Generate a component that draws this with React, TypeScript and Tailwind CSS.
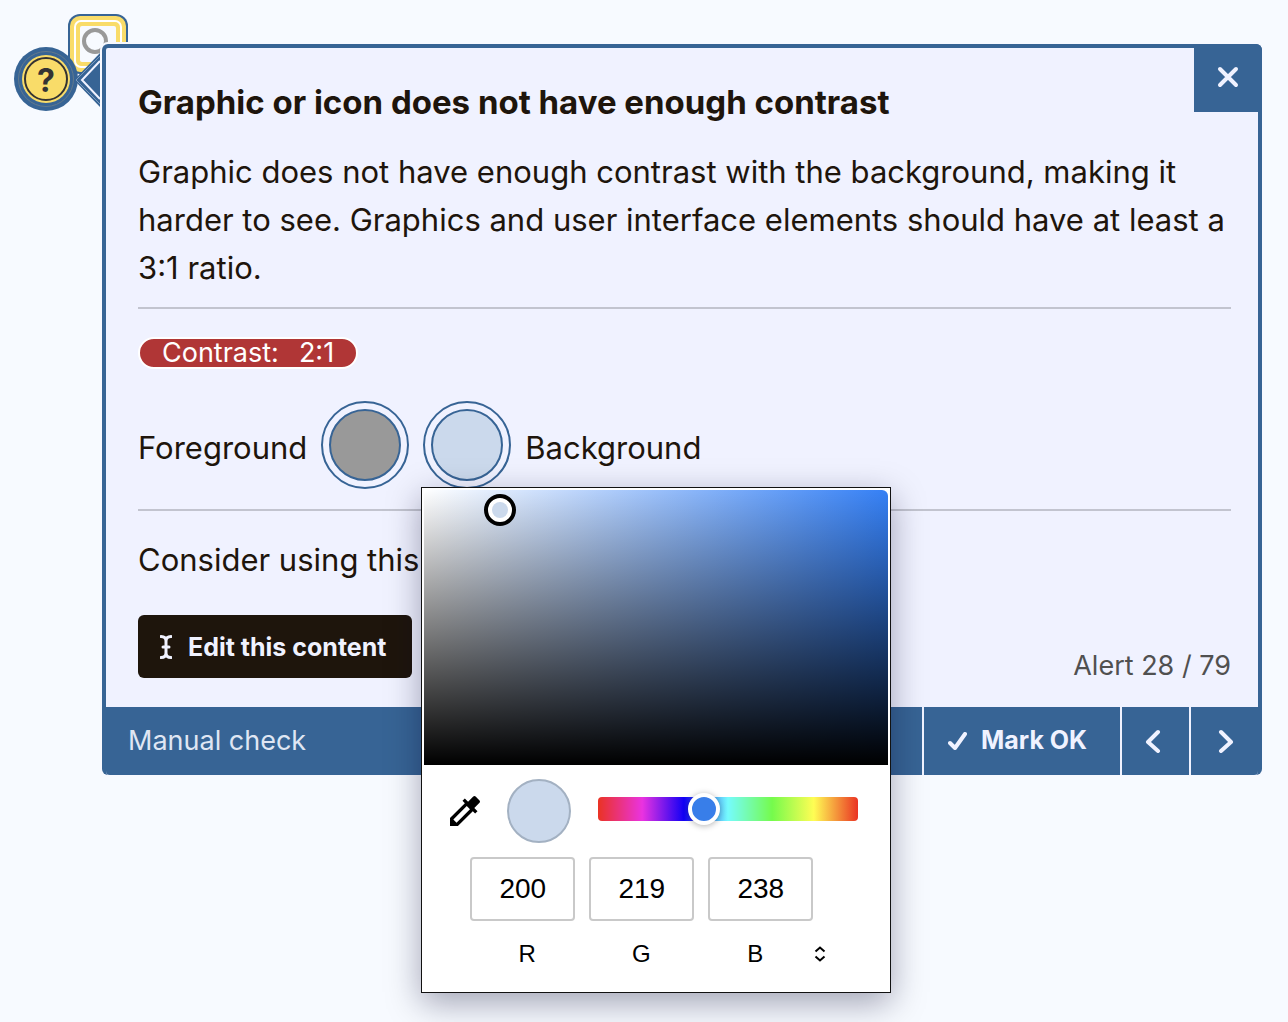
import { useState } from 'react'
import { MdColorize } from 'react-icons/md'

const channels = [
  { id: 'r', label: 'R', value: '200' },
  { id: 'g', label: 'G', value: '219' },
  { id: 'b', label: 'B', value: '238' },
]

const swatchInput =
  'block size-[88px] cursor-pointer appearance-none rounded-full border-2 border-[#376495] bg-[#f0f2ff] p-[6px] [&::-webkit-color-swatch-wrapper]:p-0 [&::-webkit-color-swatch]:rounded-full [&::-webkit-color-swatch]:border-2 [&::-webkit-color-swatch]:border-[#376495]'

function FlaggedGraphic() {
  return (
    <svg className="absolute -top-[30px] -left-[34px]" width="60" height="60" viewBox="0 0 60 60" aria-hidden="true">
      <rect x="0" y="0" width="60" height="60" rx="12" fill="#376495" />
      <rect x="2" y="2" width="56" height="56" rx="10" fill="#f9dc69" />
      <rect x="7" y="7" width="46" height="46" rx="6" fill="none" stroke="#fff" strokeWidth="2" />
      <rect x="12" y="12" width="36" height="36" rx="2" fill="#f7faff" />
      <circle cx="27" cy="27" r="11" fill="none" stroke="#999" strokeWidth="4" />
    </svg>
  )
}

function Pointer() {
  return (
    <svg className="absolute top-1 -left-[28px]" width="28" height="64" viewBox="0 0 28 64" aria-hidden="true">
      <path d="M0 32 L26 5 V59 Z" fill="#376495" />
      <path d="M26 8 L2 32 L26 56" fill="none" stroke="#7c9abd" strokeWidth="1" />
      <path d="M26 13 L8 32 L26 51" fill="none" stroke="#f0f2ff" strokeWidth="2" />
    </svg>
  )
}

function ColorPicker() {
  const [hue, setHue] = useState(142)

  return (
    <div className="absolute top-[86px] -left-0.5 z-10 w-[470px] border border-[#111] bg-white p-[2px] font-['Liberation_Sans',Arial,sans-serif] text-black shadow-[0_10px_32px_rgba(0,0,40,0.35)]">
      <div className="relative h-[275px] rounded-t-md bg-[linear-gradient(to_top,#000,transparent),linear-gradient(to_right,#fff,#3580f5)]">
        <span className="absolute top-[4px] left-[60px] size-8 rounded-full border-4 border-black bg-white p-1">
          <span className="block size-4 rounded-full bg-[#cbd9ec]" />
        </span>
      </div>
      <div className="flex items-center pt-[14px] pr-[30px] pl-[21px]">
        <button aria-label="Pick a color" className="mr-[22px]">
          <MdColorize size={40} />
        </button>
        <span className="mr-[27px] size-16 rounded-full border-2 border-[#a3b1c2] bg-[#cbd9ec]" />
        <input
          type="range"
          aria-label="Hue"
          min={0}
          max={360}
          value={hue}
          onChange={e => setHue(Number(e.target.value))}
          className="mb-1 h-6 min-w-0 flex-1 appearance-none rounded bg-[linear-gradient(to_right,#ea3323,#ea33e0_17%,#1200f5_33%,#75fbfd_50%,#75fb4c_67%,#fffd54_83%,#ea3323)] [&::-webkit-slider-thumb]:size-8 [&::-webkit-slider-thumb]:appearance-none [&::-webkit-slider-thumb]:rounded-full [&::-webkit-slider-thumb]:border-4 [&::-webkit-slider-thumb]:border-white [&::-webkit-slider-thumb]:bg-[#387ee9] [&::-webkit-slider-thumb]:shadow-[0_1px_6px_rgba(0,0,0,0.3)]"
        />
      </div>
      <div className="mt-[14px] flex gap-[14px] pl-[46px]">
        {channels.map(c => (
          <input
            key={c.id}
            id={c.id}
            defaultValue={c.value}
            className="h-16 w-[105px] rounded border-2 border-[#c9c9c9] text-center text-[28px]"
          />
        ))}
      </div>
      <div className="mt-[17px] flex items-center pb-5 pl-[46px] text-2xl">
        {channels.map(c => (
          <label key={c.id} htmlFor={c.id} className="w-[114px] text-center">{c.label}</label>
        ))}
        <button aria-label="Change color format">
          <svg width="16" height="20" viewBox="0 0 16 20" fill="none" stroke="currentColor" strokeWidth="2">
            <path d="M3.5 7.5 L8 3.5 L12.5 7.5 M3.5 12.5 L8 16.5 L12.5 12.5" />
          </svg>
        </button>
      </div>
    </div>
  )
}

export default function App() {
  return (
    <main className="min-h-screen bg-[#f7faff] pt-[44px] pr-[26px] pl-[102px] font-[Inter,sans-serif] text-[#1e150c]">
      <div className="relative">
        <FlaggedGraphic />
        <section role="dialog" aria-labelledby="tip-title" className="relative rounded-md border-x-4 border-t-4 border-[#376495] bg-[#f0f2ff] ring-2 ring-[#f7f9ff]">
          <header className="flex items-start justify-between pl-8">
            <h1 id="tip-title" className="pt-[30px] text-[33px] leading-[48px] font-bold">
              Graphic or icon does not have enough contrast
            </h1>
            <button aria-label="Close" className="-mt-1 -mr-1 flex size-[68px] items-center justify-center rounded-tr-md bg-[#376495]">
              <svg width="24" height="24" viewBox="0 0 24 24" fill="none" stroke="#f0f2ff" strokeWidth="4" strokeLinecap="round">
                <path d="M4 3 L20 19 M20 3 L4 19" />
              </svg>
            </button>
          </header>

          <div className="pr-[27px] pb-[29px] pl-8 text-[31px] leading-[48px]">
            <p className="mt-[22px]">
              Graphic does not have enough contrast with the background, making it harder to see. Graphics and user
              interface elements should have at least a 3:1 ratio.
            </p>
            <hr className="mt-[15px] border-t-2 border-[#c2c4cf]" />

            <div className="mt-7 flex">
              <div className="flex gap-5 rounded-full border-2 border-white bg-[#b03636] px-[22px] text-[27px] leading-7 text-white">
                <span>Contrast:</span>
                <span>2:1</span>
              </div>
            </div>

            <div className="mt-8 flex items-center gap-[14px]">
              <label htmlFor="fg" className="pt-1.5">Foreground</label>
              <input id="fg" type="color" defaultValue="#999999" className={swatchInput} />
              <div className="relative">
                <input id="bg" type="color" defaultValue="#cbd9ec" className={swatchInput} />
                <ColorPicker />
              </div>
              <label htmlFor="bg" className="pt-1.5">Background</label>
            </div>

            <hr className="mt-5 border-t-2 border-[#c2c4cf]" />
            <p className="mt-[25px]">Consider using this</p>

            <div className="mt-[31px] flex items-end justify-between">
              <button className="flex h-[63px] items-center gap-4 rounded-md bg-[#1e150c] pr-[26px] pl-[22px] text-[25px] font-bold text-[#f0f2ff]">
                <svg width="12" height="24" viewBox="0 0 12 24" fill="none" stroke="currentColor" strokeWidth="3" strokeLinecap="round">
                  <path d="M1 1.5 Q6 1.5 6 6 V18 Q6 22.5 1 22.5 M11 1.5 Q6 1.5 6 6 M6 18 Q6 22.5 11 22.5 M3 12 H9" />
                </svg>
                Edit this content
              </button>
              <span className="text-[27px] leading-6 text-[#505050]">Alert 28 / 79</span>
            </div>
          </div>

          <footer className="flex h-[68px] items-stretch rounded-b-sm bg-[#376495] text-[#f0f2ff]">
            <div className="flex flex-1 items-center pl-[22px] text-[27px] text-[#dfe6f3]">Manual check</div>
            <button className="flex w-[198px] items-center gap-[14px] border-l-2 border-[#f0f2ff] pl-6 text-[25px] font-bold">
              <svg width="19" height="18" viewBox="0 0 19 18" fill="none" stroke="currentColor" strokeWidth="4" strokeLinecap="round" strokeLinejoin="round">
                <path d="M2 11 L7 16 L17 2" />
              </svg>
              Mark OK
            </button>
            <button aria-label="Previous" className="flex w-[69px] items-center justify-center border-l-2 border-[#f0f2ff]">
              <svg width="24" height="24" viewBox="0 0 24 24" fill="none" stroke="currentColor" strokeWidth="4" strokeLinecap="round" strokeLinejoin="round">
                <path d="M14 3 L4 13 L14 22" />
              </svg>
            </button>
            <button aria-label="Next" className="flex w-[69px] items-center justify-center border-l-2 border-[#f0f2ff]">
              <svg width="24" height="24" viewBox="0 0 24 24" fill="none" stroke="currentColor" strokeWidth="4" strokeLinecap="round" strokeLinejoin="round">
                <path d="M8 3 L18 13 L8 22" />
              </svg>
            </button>
          </footer>
        </section>

        <button aria-label="Manual check needed" className="absolute top-[3px] -left-[88px] flex size-16 items-center justify-center rounded-full bg-[#376495]">
          <span className="flex size-14 items-center justify-center rounded-full border border-[#62798c]">
            <span className="flex size-12 items-center justify-center rounded-full bg-[#f9dc69]">
              <span className="flex size-11 items-center justify-center rounded-full border-2 border-[#333] pt-1 text-[32px] leading-none font-bold text-[#333]">?</span>
            </span>
          </span>
        </button>
        <Pointer />
      </div>
    </main>
  )
}
